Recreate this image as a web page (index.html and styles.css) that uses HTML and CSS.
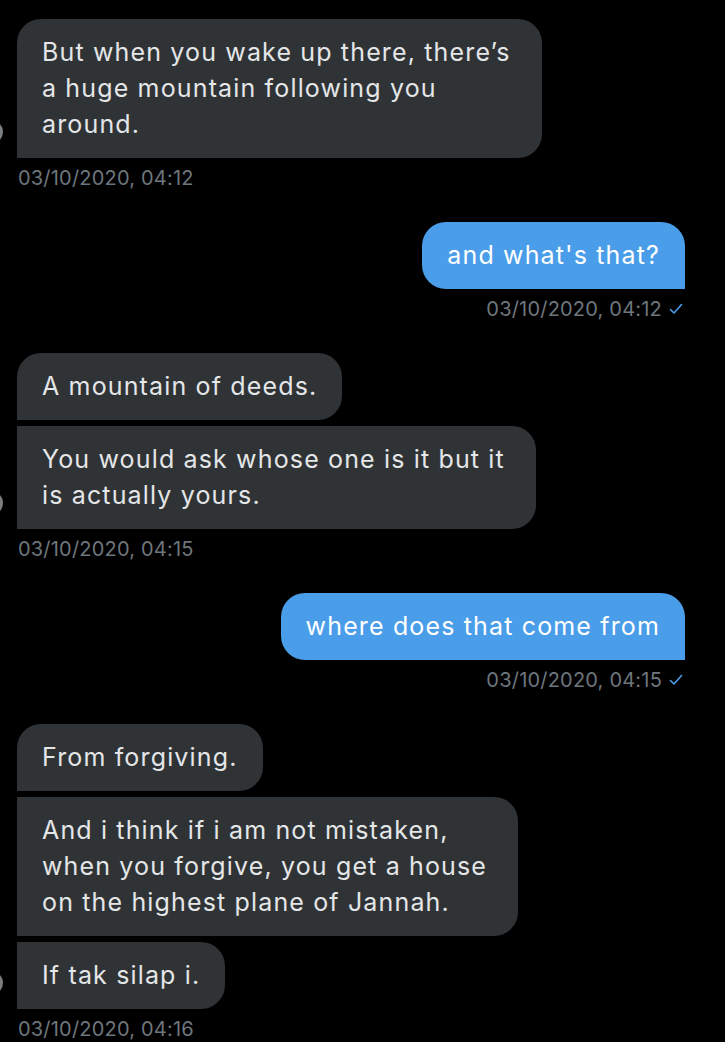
FILE: index.html
```html
<!DOCTYPE html>
<html>
<head>
    <title>Messages</title>
    <link rel="stylesheet" href="styles.css">
</head>
<body>
    <div class="thread">
        <!-- received -->
        <div class="group received">
            <div class="bubble multi first last">But when you wake up there, there’s<br>a huge mountain following you<br>around.</div>
            <span class="avatar"></span>
            <div class="stamp">03/10/2020, 04:12</div>
        </div>

        <!-- sent -->
        <div class="group sent">
            <div class="bubble first last">and what's that?</div>
            <div class="stamp">03/10/2020, 04:12 <svg class="tick" width="14" height="12" viewBox="0 0 14 12"><path d="M1.5 6.5 L5 10 L12.5 1.5" fill="none" stroke="#4a9de8" stroke-width="1.6" stroke-linecap="round" stroke-linejoin="round"/></svg></div>
        </div>

        <div class="group received">
            <div class="bubble first">A mountain of deeds.</div>
            <div class="bubble multi last">You would ask whose one is it but it<br>is actually yours.</div>
            <span class="avatar"></span>
            <div class="stamp">03/10/2020, 04:15</div>
        </div>

        <div class="group sent">
            <div class="bubble first last">where does that come from</div>
            <div class="stamp">03/10/2020, 04:15 <svg class="tick" width="14" height="12" viewBox="0 0 14 12"><path d="M1.5 6.5 L5 10 L12.5 1.5" fill="none" stroke="#4a9de8" stroke-width="1.6" stroke-linecap="round" stroke-linejoin="round"/></svg></div>
        </div>

        <div class="group received">
            <div class="bubble first">From forgiving.</div>
            <div class="bubble multi">And i think if i am not mistaken,<br>when you forgive, you get a house<br>on the highest plane of Jannah.</div>
            <div class="bubble last">If tak silap i.</div>
            <span class="avatar"></span>
            <div class="stamp">03/10/2020, 04:16</div>
        </div>
    </div>
</body>
</html>
```

FILE: styles.css
```css
body {
    margin: 0;
    background-color: #000000;
    font-family: Inter, "Open Sans", sans-serif;
    overflow: hidden;
}
.thread {
    display: flex;
    flex-direction: column;
    gap: 32px;
    padding: 19px 40px 0 17px;
}
.group {
    position: relative;
    display: flex;
    flex-direction: column;
    gap: 6px;
}
.received {
    align-items: flex-start;
}
.sent {
    align-items: flex-end;
}
.bubble {
    padding: 15px 25px 16px 25px;
    font-size: 25px;
    line-height: 36px;
    letter-spacing: 1.15px;
    white-space: nowrap;
    border-radius: 24px;
}
/* wrapped messages get a bit more room on the right */
.bubble.multi {
    padding-right: 31px;
}
.received .bubble {
    background-color: #2f3336;
    color: #e4e6e8;
    border-top-left-radius: 0;
    border-bottom-left-radius: 0;
}
.received .bubble.first {
    border-top-left-radius: 24px;
}
.sent .bubble {
    background-color: #4a9de8;
    color: #ffffff;
    border-bottom-right-radius: 0;
}
.stamp {
    display: flex;
    align-items: center;
    gap: 7px;
    margin-top: 2px;
    font-size: 20px;
    line-height: 24px;
    letter-spacing: 0.2px;
    color: #6e767d;
}
.received .stamp {
    padding-left: 1px;
}
.tick {
    margin-right: 2px;
}
/* avatar sits mostly off-screen, only the edge shows */
.avatar {
    position: absolute;
    left: -38px;
    bottom: 46px;
    width: 24px;
    height: 24px;
    border-radius: 50%;
    background-color: #7c7f82;
}
```
